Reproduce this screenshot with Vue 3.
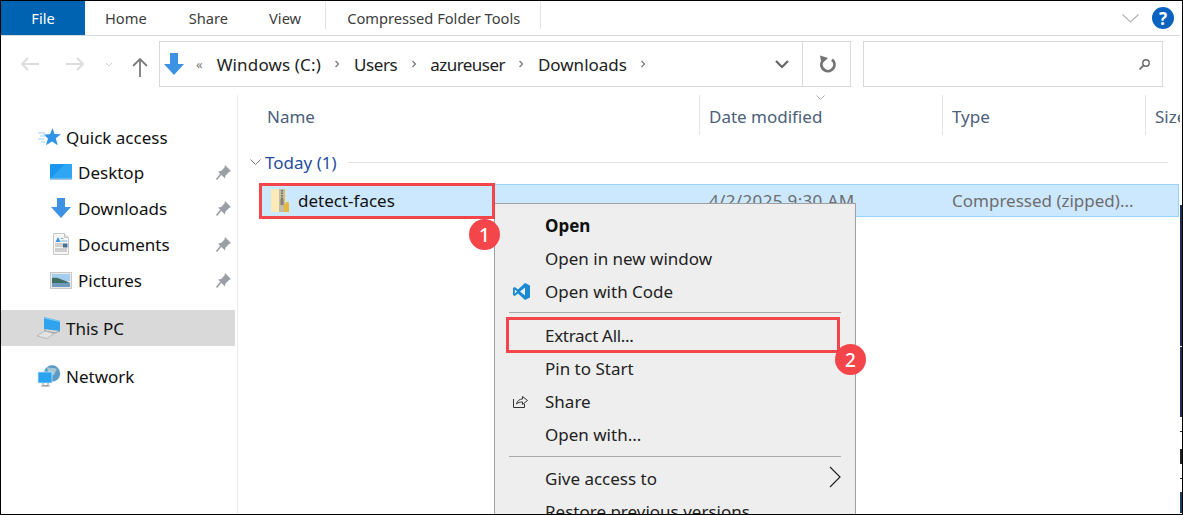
<script setup>
const sidebarPinned = [
  { label: 'Desktop', icon: 'desktop' },
  { label: 'Downloads', icon: 'down' },
  { label: 'Documents', icon: 'docs' },
  { label: 'Pictures', icon: 'pics' },
]
const crumbs = [
  { label: 'Windows (C:)', spacing: 0.15 },
  { label: 'Users', spacing: -0.4 },
  { label: 'azureuser', spacing: -0.55 },
  { label: 'Downloads', spacing: 0 },
]
</script>

<template>
  <div class="window">
    <div class="tabs">
      <div class="tab-file">File</div>
      <div class="tab t-home">Home</div>
      <div class="tab t-share">Share</div>
      <div class="tab t-view">View</div>
      <div class="tab-context">Compressed Folder Tools</div>
      <div class="tabs-right">
        <svg width="17" height="9" viewBox="0 0 17 9"><path d="M.5.500l8 7.500 8-7.500" fill="none" stroke="#b4b4b4" stroke-width="1.100"/></svg>
        <div class="help">?</div>
      </div>
    </div>

    <div class="nav">
      <div class="nav-buttons">
        <svg width="20" height="16" viewBox="0 0 20 16"><path d="M19 8H2M8 2L2 8l6 6" fill="none" stroke="#dcdcdc" stroke-width="2"/></svg>
        <svg width="20" height="16" viewBox="0 0 20 16"><path d="M1 8h17M12 2l6 6-6 6" fill="none" stroke="#dcdcdc" stroke-width="2"/></svg>
        <svg class="mini" width="8" height="5" viewBox="0 0 8 5"><path d="M1 1l3 3 3-3" fill="none" stroke="#d0d0d0"/></svg>
        <svg class="up" width="18" height="20" viewBox="0 0 18 20"><path d="M9 20V2M2 9l7-7 7 7" fill="none" stroke="#7c7c7c" stroke-width="1.800"/></svg>
      </div>
      <div class="address">
        <svg class="addr-icon" width="22" height="24" viewBox="0 0 22 24"><path d="M7 1h8v11h6L11 23 1 12h6z" fill="#3d92e4"/></svg>
        <span class="dbl">«</span>
        <template v-for="c in crumbs" :key="c.label">
          <span class="crumb" :style="{ letterSpacing: c.spacing + 'px' }">{{ c.label }}</span>
          <svg class="sep" width="6" height="8" viewBox="0 0 6 8"><path d="M1.500 1l3 3-3 3" fill="none" stroke="#777" stroke-width="1.200"/></svg>
        </template>
        <span class="grow"></span>
        <svg class="drop" width="16" height="10" viewBox="0 0 16 10"><path d="M2 2l6 6 6-6" fill="none" stroke="#666" stroke-width="2.200"/></svg>
        <div class="refresh">
          <svg class="refresh-icon" width="18" height="18" viewBox="0 0 18 18"><path d="M13 4.600A6.500 6.500 0 1 1 3 7" fill="none" stroke="#737373" stroke-width="2.800"/><path d="M1 .5L9 3 2.500 9z" fill="#737373"/></svg>
        </div>
      </div>
      <div class="search">
        <svg width="13" height="13" viewBox="0 0 13 13"><circle cx="8" cy="5" r="3.200" fill="none" stroke="#666" stroke-width="1.400"/><path d="M5.600 7.400L1.500 11.500" stroke="#666" stroke-width="1.600"/></svg>
      </div>
    </div>

    <div class="main">
      <aside class="side">
        <div class="side-row top first">
          <svg class="top-icon" width="24" height="20" viewBox="0 0 24 20"><path d="M15.500 1l2 6 6.500.2-5.200 4 2 7L15 14.500l-6 3.700 2-6.800-4.500-3.800 6.500-.4z" fill="#2f94e8"/><path d="M1 6h7M3 9h6M1 12h6M4 15h4" stroke="#9fd0f5" stroke-width="1.200"/></svg>
          <span>Quick access</span>
        </div>
        <div v-for="p in sidebarPinned" :key="p.label" class="side-row sub">
          <svg v-if="p.icon === 'desktop'" class="sub-icon" width="22" height="16" viewBox="0 0 22 16"><rect width="22" height="15.500" rx="1" fill="#1a96ee"/><path d="M0 15L15 0h7v15z" fill="#2ea6f3"/><rect y="14.500" width="22" height="1.500" fill="#9cc6e4"/></svg>
          <svg v-else-if="p.icon === 'down'" class="sub-icon" width="22" height="20" viewBox="0 0 22 20"><path d="M7 0h8v9h6L11 20 1 9h6z" fill="#3d92e4"/></svg>
          <svg v-else-if="p.icon === 'docs'" class="sub-icon" width="22" height="22" viewBox="0 0 22 22"><path d="M3.500.5h11l4 4v17h-15z" fill="#f6f6f6" stroke="#c8c8c8"/><path d="M14.500.5v4h4" fill="#e2e2e2" stroke="#c8c8c8"/><path d="M8 4l-2.500 5h5z" fill="#3d92e4"/><path d="M10.500 5.500h3M10.500 8h7" stroke="#7fb4e0"/><path d="M5 11h8M5 13h8M5 16h12M5 18h12" stroke="#a9a9a9"/><rect x="13" y="10.500" width="4.500" height="4" fill="#46708f"/></svg>
          <svg v-else class="sub-icon" width="22" height="17" viewBox="0 0 22 17"><rect x=".5" y=".5" width="21" height="16" fill="#e8e8e8" stroke="#c8c8c8"/><rect x="2" y="2" width="18" height="7" fill="#a5cdee"/><path d="M2 6c5-1 9 1 18 5v1H2z" fill="#3f6f62"/><rect x="2" y="11" width="18" height="4" fill="#6f9cbd"/></svg>
          <span class="sub-label">{{ p.label }}</span>
          <svg class="pin" width="17" height="17" viewBox="0 0 17 17"><path d="M10 1l6 6-2 1-3.500 3.500-.5 3L5.500 10 3 7.500l3-.5L9.500 3.500z" fill="#9a9fa5"/><path d="M6 10l-4.500 5.500" stroke="#9a9fa5" stroke-width="1.600"/></svg>
        </div>
        <div class="side-row top selected">
          <svg class="top-icon" width="24" height="22" viewBox="0 0 24 22"><path d="M7 0l16 4v10L7 12z" fill="#2fa3ee"/><path d="M7 0l16 4v1L7 1.500z" fill="#7cc8f6"/><path d="M8 12v2l10 2 5-2" fill="none" stroke="#9a9a9a"/><path d="M0 19l8-5 9 2.500-7 5z" fill="#e4e4e4" stroke="#a8a8a8" stroke-width=".7"/></svg>
          <span>This PC</span>
        </div>
        <div class="side-row top network">
          <svg class="top-icon" width="24" height="22" viewBox="0 0 24 22"><circle cx="15" cy="8.500" r="8.200" fill="#5a9ac6"/><path d="M10 2c4 1.500 8 0 10 2.500-2.500 2-1 5.500-5 6-3 .3-4-3-5-8.500z" fill="#a7c6cf"/><rect x="1" y="7" width="14" height="11" fill="#2aa3f0" stroke="#d5ecfb" stroke-width=".7"/><path d="M6 18v2.500h5V18M4 21h9" fill="none" stroke="#9a9a9a"/></svg>
          <span>Network</span>
        </div>
      </aside>

      <section class="list">
        <div class="head">
          <div class="col c-name">Name</div>
          <div class="col c-date">Date modified
            <svg class="sort" width="9" height="5" viewBox="0 0 9 5"><path d="M.5.500l4 4 4-4" fill="none" stroke="#a8a8a8"/></svg>
          </div>
          <div class="col c-type">Type</div>
          <div class="col c-size">Size</div>
        </div>
        <div class="group">
          <svg width="11" height="7" viewBox="0 0 11 7"><path d="M.5.500l5 5 5-5" fill="none" stroke="#7c7c7c"/></svg>
          <span class="group-label">Today (1)</span>
          <span class="group-line"></span>
        </div>
        <div class="file-row">
          <div class="f-name">
            <svg class="zip" width="18" height="23" viewBox="0 0 18 23"><rect width="15" height="23" fill="#fbe29a"/><rect width="8" height="23" fill="#fdeab8"/><rect x="8" width="6" height="23" fill="#c4bda6"/><path d="M11 1v13" stroke="#6f6b60" stroke-width="1.800" stroke-dasharray="1.500 1"/><rect x="9.500" y="10" width="3" height="6" fill="#85806f"/><path d="M15.500 13h1.500l1 1v9h-5v-7z" fill="#e6b640"/></svg>
            <span>detect-faces</span>
          </div>
          <div class="f-date">4/2/2025 9:30 AM</div>
          <div class="f-type">Compressed (zipped)...</div>
        </div>
      </section>
    </div>

    <div class="edge"></div>

    <div class="menu">
      <div class="m-row bold">Open</div>
      <div class="m-row">Open in new window</div>
      <div class="m-row">
        <svg class="m-icon" width="17" height="17" viewBox="0 0 17 17"><path d="M12 0l5 2.400v12.200L12 17 5 10.500 1.800 13 0 12V5l1.800-1L5 6.500z" fill="#1a8ad4"/><path d="M12 4.500L7 8.500l5 4z" fill="#eee"/><path d="M1.800 6.300v4.400L4 8.500z" fill="#eee"/></svg>
        Open with Code
      </div>
      <div class="m-sep"></div>
      <div class="m-row tight">Extract All...</div>
      <div class="m-row">Pin to Start</div>
      <div class="m-row">
        <svg class="m-icon share" width="15" height="13" viewBox="0 0 15 13"><path d="M.5 4v8.500h11V9" fill="none" stroke="#333"/><path d="M3.500 9c.5-3 3-5 6-5V1.500l5 4-5 4V7c-2.500 0-4.500.5-6 2z" fill="none" stroke="#333"/></svg>
        Share
      </div>
      <div class="m-row">Open with...</div>
      <div class="m-sep second"></div>
      <div class="m-row">Give access to
        <svg class="m-arrow" width="12" height="22" viewBox="0 0 12 22"><path d="M1 1l10 10L1 21" fill="none" stroke="#222" stroke-width="1.200"/></svg>
      </div>
      <div class="m-row">Restore previous versions</div>
    </div>

    <div class="mark mark-1"></div>
    <div class="mark mark-2"></div>
    <div class="badge badge-1">1</div>
    <div class="badge badge-2">2</div>
  </div>
</template>

<style scoped>
.window {
  position: relative;
  width: 1183px;
  height: 515px;
  box-sizing: border-box;
  border: 1px solid #000;
  background: #fff;
  overflow: hidden;
  display: flex;
  flex-direction: column;
  font-family: "Noto Sans", sans-serif;
  font-size: 17px;
  color: #1a1a1a;
}
.tabs {
  height: 34px;
  flex: none;
  display: flex;
  align-items: center;
  margin-right: 2px;
  border-bottom: 1px solid #dadbdc;
  font-size: 14.67px;
}
.tab-file {
  width: 84px;
  height: 34px;
  background: #0063b1;
  color: #fff;
  display: flex;
  align-items: center;
  justify-content: center;
}
.tab { color: #3c3c3c; }
.t-home { margin-left: 20px; }
.t-share { margin-left: 42px; }
.t-view { margin-left: 41px; }
.tab-context {
  margin-left: 24px;
  height: 28px;
  align-self: flex-start;
  padding: 6px 20px 0 21px;
  display: flex;
  align-items: center;
  border-left: 1px solid #e2e2e2;
  border-right: 1px solid #e2e2e2;
  box-sizing: border-box;
  color: #3c3c3c;
}
.tabs-right {
  margin-left: auto;
  display: flex;
  align-items: center;
  gap: 13px;
  padding-right: 6px;
}
.help {
  width: 22px;
  height: 22px;
  border-radius: 50%;
  background: #0a63c0;
  color: #fff;
  font-weight: 700;
  font-size: 17px;
  display: flex;
  align-items: center;
  justify-content: center;
}
.nav {
  height: 46px;
  margin-top: 5px;
  flex: none;
  display: flex;
}
.nav-buttons {
  width: 158px;
  display: flex;
  align-items: center;
  padding-left: 19px;
  box-sizing: border-box;
}
.nav-buttons .mini { margin: 0 18px 0 20px; }
.nav-buttons svg:nth-child(2) { margin-left: 25px; }
.up { margin-top: 6px; }
.address {
  width: 692px;
  box-sizing: border-box;
  border: 1px solid #d9d9d9;
  display: flex;
  align-items: center;
  padding-left: 3px;
}
.dbl { margin: 0 14px 0 11px; font-size: 13px; color: #777; }
.crumb { color: #222; }
.sep { margin: 0 13.500px; }
.grow { flex: 1; }
.drop { margin-right: 12px; }
.refresh {
  width: 47px;
  height: 100%;
  border-left: 1px solid #d9d9d9;
  display: flex;
  align-items: center;
  justify-content: center;
}
.refresh-icon { margin-left: 2px; }
.search {
  width: 300px;
  margin-left: 12px;
  box-sizing: border-box;
  border: 1px solid #d9d9d9;
  display: flex;
  align-items: center;
  justify-content: flex-end;
  padding-right: 11px;
}
.main {
  flex: 1;
  margin: 8px 2px 0 0;
  display: flex;
  min-height: 0;
}
.side {
  width: 237px;
  flex: none;
  padding-top: 23px;
  box-sizing: border-box;
  border-right: 1px solid #ececec;
}
.side-row {
  height: 36px;
  display: flex;
  align-items: center;
  color: #111;
  box-sizing: border-box;
}
.side-row.first { padding-top: 2px; }
.side-row.top { padding-left: 36px; }
.top-icon { width: 24px; margin-right: 5px; flex: none; }
.side-row.sub { padding-left: 49px; }
.sub-icon { margin-right: 6px; flex: none; }
.sub-label { flex: 1; }
.pin { margin-right: 5px; }
.selected { background: #d9d9d9; margin: 12px 2px 0 0; }
.network { margin-top: 12px; }
.list { flex: 1; min-width: 0; overflow: hidden; }
.head {
  height: 40px;
  display: flex;
  color: #4c607a;
}
.col {
  box-sizing: border-box;
  height: 100%;
  display: flex;
  align-items: center;
  flex: none;
  position: relative;
  padding: 2px 0 0 9px;
  border-right: 1px solid #e5e5e5;
  white-space: nowrap;
}
.c-name { width: 462px; padding-left: 29px; }
.c-date { width: 243px; }
.c-type { width: 203px; }
.c-size { border: 0; }
.sort { position: absolute; left: 116px; top: 0; }
.group {
  height: 54px;
  padding-left: 12px;
  display: flex;
  align-items: center;
  color: #1f4e9e;
}
.group-label { margin: 0 11px 0 4px; }
.group-line { flex: 1; height: 1px; background: #e2e2e2; margin-right: 12px; }
.file-row {
  height: 33px;
  margin: -5px 1px 0 23px;
  background: #cce8ff;
  border: 1px solid #99d1ff;
  display: flex;
  align-items: center;
  box-sizing: border-box;
  white-space: nowrap;
}
.f-name { width: 447px; flex: none; display: flex; align-items: center; color: #111; padding-left: 9px; box-sizing: border-box; }
.zip { margin-right: 9px; }
.f-date { width: 243px; flex: none; color: #6d6d6d; letter-spacing: .35px; }
.f-type { color: #6d6d6d; }
.edge {
  position: absolute;
  top: 0;
  bottom: 0;
  right: 0;
  width: 2px;
  background: linear-gradient(to bottom,
    #fff 0 204px, #1c2f50 204px 345px, #fff 345px 346px, #1c2f50 346px 416px,
    #fff 416px 430px, #222 430px 431px, #fff 431px 448px, #222 448px 463px,
    #fff 463px 477px, #222 477px 478px, #fff 478px 491px, #1c3a60 491px 512px, #fff 512px);
}
.menu {
  position: absolute;
  left: 493px;
  top: 202px;
  width: 362px;
  height: 330px;
  box-sizing: border-box;
  background: #eeeeee;
  border: 1px solid #a0a0a0;
  padding: 5px 14px 0 14px;
  color: #222;
}
.m-row {
  height: 33px;
  display: flex;
  align-items: center;
  padding-left: 36px;
  position: relative;
  white-space: nowrap;
}
.tight { letter-spacing: -.3px; }
.bold { font-weight: 700; color: #111; }
.m-icon { position: absolute; left: 4px; top: 8px; }
.m-icon.share { left: 4px; top: 10px; }
.m-arrow { position: absolute; right: 0; top: 4px; }
.m-sep { height: 1px; background: #a8a8a8; margin: 4px 0 6px; }
.m-sep.second { margin: 5px 0 5px; }
.mark { position: absolute; border: 3px solid #f4454a; box-sizing: border-box; }
.mark-1 { left: 258px; top: 182px; width: 236px; height: 36px; }
.mark-2 { left: 505px; top: 316px; width: 334px; height: 36px; }
.badge {
  position: absolute;
  width: 31px;
  height: 31px;
  border-radius: 50%;
  background: #f4454a;
  color: #fff;
  font-size: 19px;
  font-weight: 500;
  display: flex;
  align-items: center;
  justify-content: center;
}
.badge-1 { left: 468px; top: 218px; }
.badge-2 { left: 834px; top: 343px; }
</style>
